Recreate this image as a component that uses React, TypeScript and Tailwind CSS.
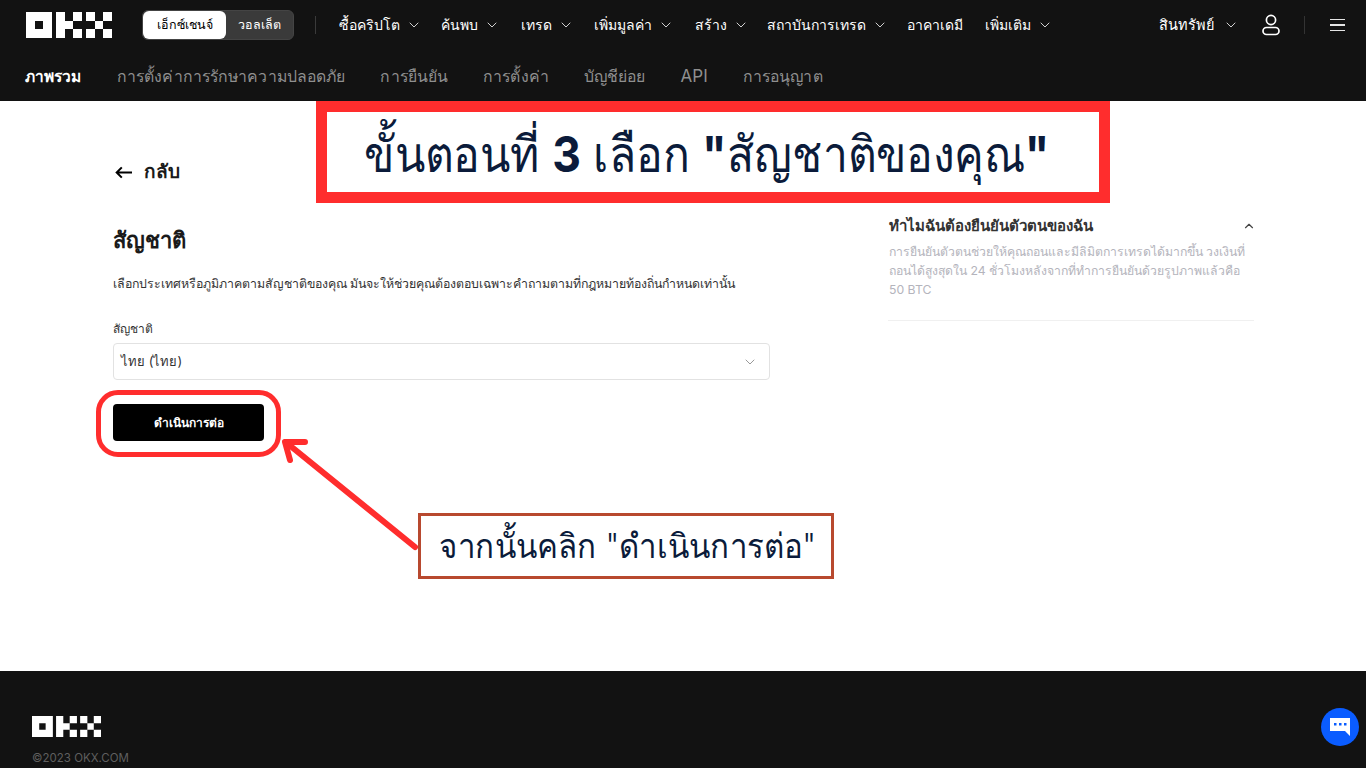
import { ChevronDown, ChevronUp } from 'lucide-react';

const navItems = [
  { label: 'ซื้อคริปโต', caret: true, width: 'w-[102px]' },
  { label: 'ค้นพบ', caret: true, width: 'w-[80px]' },
  { label: 'เทรด', caret: true, width: 'w-[73px]' },
  { label: 'เพิ่มมูลค่า', caret: true, width: 'w-[101px]' },
  { label: 'สร้าง', caret: true, width: 'w-[72px]' },
  { label: 'สถาบันการเทรด', caret: true, width: 'w-[140px]' },
  { label: 'อาคาเดมี', caret: false, width: 'w-[78px]' },
  { label: 'เพิ่มเติม', caret: true, width: 'w-[80px]' },
];

const subNav = ['การตั้งค่าการรักษาความปลอดภัย', 'การยืนยัน', 'การตั้งค่า', 'บัญชีย่อย'];

function OkxLogo({ className }: { className: string }) {
  return (
    <svg viewBox="0 0 86 26" className={className} fill="#fff">
      <path fillRule="evenodd" d="M0 0h26v26H0zM9 9v8h8V9z" />
      <path d="M30 0h9v26h-9zM39 9h8v8h-8zM47 0h9v9h-9zM47 17h9v9h-9z" />
      <path d="M60 0h9v9h-9zM60 17h9v9h-9zM69 9h8v8h-8zM77 0h9v9h-9zM77 17h9v9h-9z" />
    </svg>
  );
}

function Header() {
  return (
    <header className="bg-[#121212] text-white">
      <div className="h-[50px] flex items-center pl-[26px] pr-[21px]">
        <OkxLogo className="w-[86px] h-[26px]" />
        <div className="ml-[30px] flex h-[30px] w-[152px] rounded-md bg-[#3a3a3a] border border-[#444] text-[12.5px]">
          <div className="w-[83px] bg-white text-black rounded-md flex items-center justify-center">เอ็กซ์เชนจ์</div>
          <div className="flex-1 flex items-center justify-center text-white">วอลเล็ต</div>
        </div>
        <div className="ml-[21px] mr-[23px] w-px h-[18px] bg-[#3a3a3a]" />
        {navItems.map((item) => (
          <div key={item.label} className={`${item.width} flex items-center gap-[6px] text-sm font-medium`}>
            {item.label}
            {item.caret && <ChevronDown size={16} strokeWidth={1.5} className="text-[#d0d0d0]" />}
          </div>
        ))}
        <div className="ml-auto flex items-center text-sm font-medium">
          <span className="text-[14.5px]">สินทรัพย์</span>
          <ChevronDown size={16} strokeWidth={1.5} className="ml-[9px] text-[#d0d0d0]" />
          <svg viewBox="0 0 20 22" className="ml-[22px] w-[20px] h-[22px]" fill="none" stroke="#fff" strokeWidth="1.7">
            <circle cx="10" cy="6" r="4.6" />
            <rect x="2" y="13.5" width="16" height="7" rx="3.5" />
          </svg>
          <div className="ml-[23px] w-px h-[18px] bg-[#333]" />
          <div className="ml-[25px] flex flex-col gap-[4px]">
            <div className="w-[15px] h-[1.5px] bg-[#e5e5e5]" />
            <div className="w-[15px] h-[1.5px] bg-[#e5e5e5]" />
            <div className="w-[15px] h-[1.5px] bg-[#e5e5e5]" />
          </div>
        </div>
      </div>
      <div className="h-[51px] flex items-center pl-[25px] pt-[2px] gap-[35px] text-[15.8px] tracking-[0.1px] text-[#8f8f8f]">
        <span className="mr-px text-white text-[15.5px] tracking-normal font-bold">ภาพรวม</span>
        {subNav.map((item) => (
          <span key={item}>{item}</span>
        ))}
        <span className="text-[17px] pt-px">API</span>
        <span>การอนุญาต</span>
      </div>
    </header>
  );
}

function Main() {
  return (
    <main className="h-[570px] bg-white flex text-[#1a1a1a]">
      <div className="ml-[113px] w-[657px] pt-[59px]">
        <div className="flex items-center gap-[12px] h-6 text-[19px] font-bold">
          <svg viewBox="0 0 20 14" className="ml-[2px] w-[17px] h-[13px]" fill="none" stroke="#000" strokeWidth="2.4">
            <path d="M20 7H2M8 1L2 7l6 6" />
          </svg>
          กลับ
        </div>
        <h1 className="mt-[42px] text-[22px] font-bold leading-7">สัญชาติ</h1>
        <p className="mt-[20px] text-[12.33px] leading-5 text-[#333]">
          เลือกประเทศหรือภูมิภาคตามสัญชาติของคุณ มันจะให้ช่วยคุณต้องตอบเฉพาะคำถามตามที่กฎหมายท้องถิ่นกำหนดเท่านั้น
        </p>
        <div className="mt-[25px] text-xs leading-5 text-[#333]">สัญชาติ</div>
        <div className="mt-[4px] h-[37px] border border-[#e2e2e2] rounded flex items-center justify-between pl-[7px] pr-[11px] text-[13px] text-[#333]">
          ไทย (ไทย)
          <ChevronDown size={16} strokeWidth={1.5} className="text-[#999]" />
        </div>
        <button className="mt-[24px] w-[151px] h-[37px] bg-black text-white text-xs font-semibold rounded flex items-center justify-center">
          ดำเนินการต่อ
        </button>
      </div>
      <aside className="ml-[118px] w-[366px] pt-[115px]">
        <div className="flex items-center justify-between pl-px -mr-[2px] text-[15px] font-bold text-[#333] leading-5">
          ทำไมฉันต้องยืนยันตัวตนของฉัน
          <ChevronUp size={14} strokeWidth={2} className="text-[#444]" />
        </div>
        <p className="mt-[6px] pb-[21px] pl-px pr-[8px] border-b border-[#f0f0f0] text-[12.25px] leading-[19px] text-[#b4b4bc]">
          การยืนยันตัวตนช่วยให้คุณถอนและมีลิมิตการเทรดได้มากขึ้น วงเงินที่ถอนได้สูงสุดใน 24 ชั่วโมงหลังจากที่ทำการยืนยันด้วยรูปภาพแล้วคือ 50 BTC
        </p>
      </aside>
    </main>
  );
}

function Footer() {
  return (
    <footer className="h-[97px] bg-[#121212] pl-[32px] pt-[45px]">
      <OkxLogo className="w-[69px] h-[21px]" />
      <div className="mt-[13px] text-[11.5px] leading-4 text-[#5f5f5f]">©2023 OKX.COM</div>
    </footer>
  );
}

function Annotations() {
  return (
    <>
      <div className="absolute left-[316px] top-[101px] w-[794px] h-[102px] border-[11px] border-[#ff2d2d] bg-white flex items-center justify-center pt-[3px] pr-[13px] text-[#0b1b3a] whitespace-nowrap">
        <span className="text-[50px] leading-none font-light scale-x-[0.89]">
          ขั้นตอนที่&nbsp;<b className="font-bold">3</b>&nbsp;เลือก&nbsp;<b className="font-bold">"</b>สัญชาติของคุณ<b className="font-bold">"</b>
        </span>
      </div>
      <div className="absolute left-[96px] top-[390px] w-[185px] h-[67px] border-[5px] border-[#ff2d2d] rounded-[22px]" />
      <svg viewBox="0 0 150 120" className="absolute left-[278px] top-[434px] w-[150px] h-[120px]" fill="none" stroke="#ff2d2d" strokeWidth="6" strokeLinecap="round" strokeLinejoin="round">
        <path d="M137 113 L10 10" />
        <path d="M12 26 L7 8 L27 8" />
      </svg>
      <div className="absolute left-[418px] top-[513px] w-[416px] h-[66px] border-[3px] border-[#b8492f] bg-white flex items-center justify-center pl-[3px] text-[#0b1b3a] whitespace-nowrap">
        <span className="text-[34px] leading-none font-light scale-x-[0.92]">จากนั้นคลิก "ดำเนินการต่อ"</span>
      </div>
      <div className="absolute left-[1321px] top-[708px] w-[38px] h-[38px] rounded-full bg-[#0a5cff] flex items-center justify-center">
        <svg viewBox="0 0 20 18" className="w-[20px] h-[18px]">
          <path d="M0 0h20v18l-5-5H0z" fill="#fff" />
          <rect x="4" y="5" width="2.5" height="2.5" fill="#0a5cff" />
          <rect x="9" y="5" width="2.5" height="2.5" fill="#0a5cff" />
          <rect x="14" y="5" width="2.5" height="2.5" fill="#0a5cff" />
        </svg>
      </div>
    </>
  );
}

export default function App() {
  return (
    <div className="relative w-[1366px] h-[768px] overflow-hidden font-['Inter','Noto_Sans',sans-serif]">
      <Header />
      <Main />
      <Footer />
      <Annotations />
    </div>
  );
}
